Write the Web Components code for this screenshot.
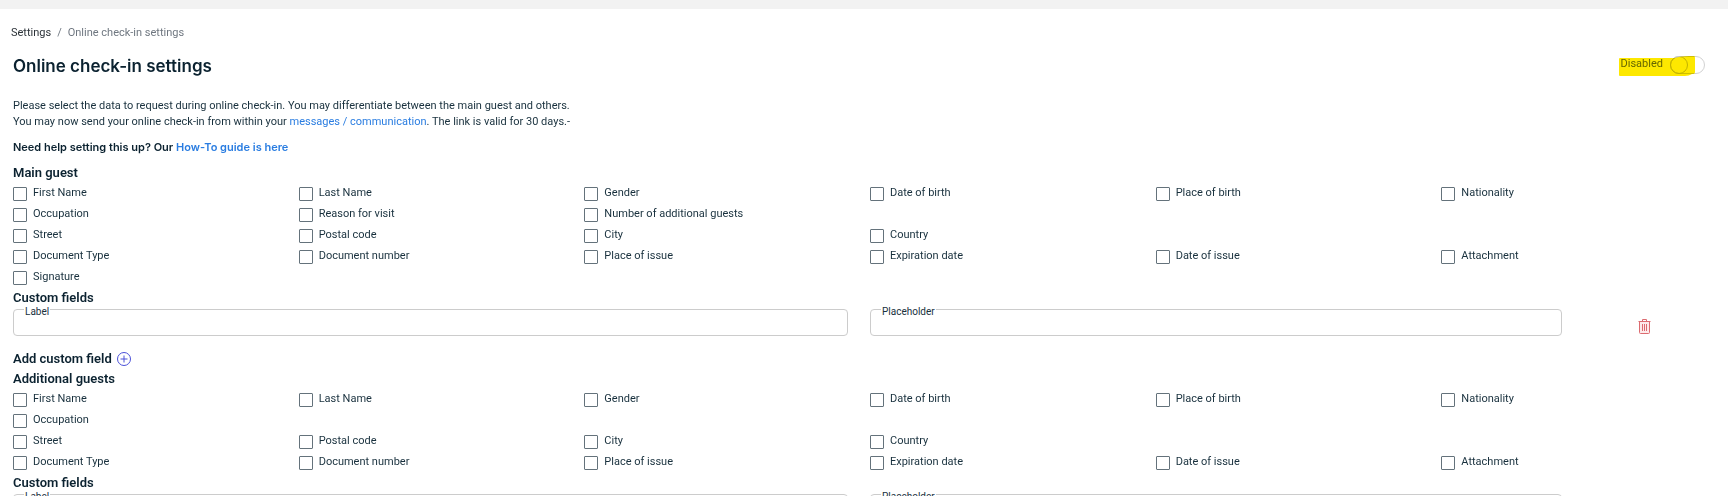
<!DOCTYPE html>
<html lang="en">
<head>
<meta charset="utf-8">
<title>Online check-in settings</title>
<style>
  body {
    margin: 0;
    background: #fff;
    color: #18303d;
    font: 11px/16px Roboto, "Liberation Sans", sans-serif;
  }
</style>
</head>
<body>
<settings-page>
  <bread-crumb slot="crumbs" parent="Settings" current="Online check-in settings"></bread-crumb>
  <toggle-switch slot="toggle">Disabled</toggle-switch>

  <guest-section heading="Main guest">
    <check-row items="First Name,Last Name,Gender,Date of birth,Place of birth,Nationality"></check-row>
    <check-row items="Occupation,Reason for visit,Number of additional guests"></check-row>
    <check-row items="Street,Postal code,City,Country"></check-row>
    <check-row items="Document Type,Document number,Place of issue,Expiration date,Date of issue,Attachment"></check-row>
    <check-row items="Signature"></check-row>
  </guest-section>
  <guest-section heading="Custom fields">
    <custom-field></custom-field>
  </guest-section>
  <add-field>Add custom field</add-field>

  <guest-section heading="Additional guests">
    <check-row items="First Name,Last Name,Gender,Date of birth,Place of birth,Nationality"></check-row>
    <check-row items="Occupation"></check-row>
    <check-row items="Street,Postal code,City,Country"></check-row>
    <check-row items="Document Type,Document number,Place of issue,Expiration date,Date of issue,Attachment"></check-row>
  </guest-section>
  <guest-section heading="Custom fields">
    <custom-field></custom-field>
  </guest-section>
</settings-page>

<script>
// page frame: grey strip, breadcrumb, title row, intro text and the sections
class SettingsPage extends HTMLElement {
  constructor() {
    super();
    const shadow = this.attachShadow({ mode: "open" });
    shadow.innerHTML = `
    <style>
      :host { display: block; border-top: 9px solid #f2f2f2; }
      main { padding: 13px 23px 0 13px; }
      header { display: flex; justify-content: space-between; align-items: flex-start; }
      h1 {
        margin: 0;
        color: #0b2230;
        font: 600 17px/24px Inter, Roboto, sans-serif;
      }
      .crumbs { padding: 16px 11px 0; }
      p { margin: 0; }
      .intro { margin-top: 20px; }
      .help {
        margin: 9px 0 8px;
        color: #0b2230;
        font-family: Inter, Roboto, sans-serif;
        font-weight: 600;
      }
      a { color: #2a7de1; text-decoration: none; }
    </style>
    <div class="crumbs"><slot name="crumbs"></slot></div>
    <main>
      <header>
        <h1>Online check-in settings</h1>
        <slot name="toggle"></slot>
      </header>
      <p class="intro">Please select the data to request during online check-in. You may differentiate between the main guest and others.<br>
      You may now send your online check-in from within your <a href="#messages">messages / communication</a>. The link is valid for 30 days.-</p>
      <p class="help">Need help setting this up? Our <a href="#guide">How-To guide is here</a></p>
      <slot></slot>
    </main>`;
  }
}

class BreadCrumb extends HTMLElement {
  connectedCallback() {
    const shadow = this.attachShadow({ mode: "open" });
    shadow.innerHTML = `
    <style>
      :host { display: block; }
      nav { display: flex; gap: 6px; color: #6f7780; }
      a { color: #2b3238; text-decoration: none; }
    </style>
    <nav aria-label="Breadcrumb">
      <a href="#settings">${this.getAttribute("parent")}</a>
      <span>/</span>
      <span>${this.getAttribute("current")}</span>
    </nav>`;
  }
}

class ToggleSwitch extends HTMLElement {
  constructor() {
    super();
    const shadow = this.attachShadow({ mode: "open" });
    shadow.innerHTML = `
    <style>
      :host { display: block; position: relative; padding-top: 2px; }
      label { display: flex; align-items: flex-start; gap: 7px; color: #66706c; }
      input {
        appearance: none;
        box-sizing: border-box;
        width: 35px;
        height: 18px;
        margin: 0;
        border: 1px solid #d2d2d2;
        border-radius: 9px;
        background: #fff;
      }
      input::before {
        content: "";
        display: block;
        box-sizing: border-box;
        width: 18px;
        height: 18px;
        margin: -1px;
        border: 1px solid #c4c4c4;
        border-radius: 50%;
      }
      /* marker stroke over the label and the knob */
      svg {
        position: absolute;
        left: -2px;
        top: 2px;
        mix-blend-mode: multiply;
        pointer-events: none;
      }
    </style>
    <label><slot></slot><input type="checkbox" role="switch"></label>
    <svg width="78" height="20" viewBox="0 0 78 20" aria-hidden="true">
      <path d="M0 3Q0 2 1 2H55Q62 0 70 0H75Q76 0 76 2V16Q76 18 73 18Q70 20 66 20H1Q0 20 0 19Z" fill="#fde800"/>
    </svg>`;
  }
}

// heading with whatever rows are put below it
class GuestSection extends HTMLElement {
  connectedCallback() {
    const shadow = this.attachShadow({ mode: "open" });
    shadow.innerHTML = `
    <style>
      :host { display: block; }
      h2 { margin: 0; color: #0b2230; font-size: 13px; line-height: 20px; font-weight: 600; }
    </style>
    <h2>${this.getAttribute("heading")}</h2>
    <slot></slot>`;
  }
}

// up to six checkboxes on one line
class CheckRow extends HTMLElement {
  connectedCallback() {
    const items = this.getAttribute("items").split(",");
    const shadow = this.attachShadow({ mode: "open" });
    shadow.innerHTML = `
    <style>
      :host { display: grid; grid-template-columns: repeat(6, 1fr); column-gap: 22px; height: 21px; }
      label { display: flex; align-items: flex-start; gap: 6px; padding-top: 2px; white-space: nowrap; }
      input {
        appearance: none;
        box-sizing: border-box;
        width: 14px;
        height: 14px;
        margin: 2px 0 0;
        border: 1px solid #64727b;
        border-radius: 1px;
        background: #fff;
      }
      input:checked { background: #2a7de1; }
    </style>
    ${items.map((item) => `<label><input type="checkbox">${item}</label>`).join("")}`;
  }
}

class CustomField extends HTMLElement {
  constructor() {
    super();
    const shadow = this.attachShadow({ mode: "open" });
    shadow.innerHTML = `
    <style>
      :host { display: grid; grid-template-columns: repeat(12, 1fr); column-gap: 22px; padding: 1px 0 13px; }
      div { position: relative; }
      .label { grid-column: span 6; }
      .placeholder { grid-column: span 5; }
      input {
        display: block;
        box-sizing: border-box;
        width: 100%;
        height: 27px;
        padding: 4px 11px;
        border: 1px solid #ccc;
        border-radius: 4px;
        font: inherit;
        color: inherit;
      }
      label {
        position: absolute;
        left: 11px;
        top: -4px;
        padding: 0 1px;
        background: #fff;
        font-size: 10px;
        line-height: 14px;
      }
      button {
        justify-self: center;
        align-self: end;
        padding: 0;
        border: 0;
        background: none;
        height: 19px;
      }
      svg { display: block; }
    </style>
    <div class="label"><input id="label" type="text"><label for="label">Label</label></div>
    <div class="placeholder"><input id="placeholder" type="text"><label for="placeholder">Placeholder</label></div>
    <button type="button" aria-label="Delete field">
      <svg width="13" height="15" viewBox="0 0 13 15" fill="none" stroke="#dc6b70">
        <path d="M1.5 2.5h10v11a1 1 0 0 1-1 1h-8a1 1 0 0 1-1-1z" fill="#fdeaea"/>
        <path d="M0.5 2.5h12M4.5 2V0.5h4V2"/>
        <path d="M4.5 5v7M6.5 5v7M8.5 5v7"/>
      </svg>
    </button>`;
  }
}

class AddField extends HTMLElement {
  constructor() {
    super();
    const shadow = this.attachShadow({ mode: "open" });
    shadow.innerHTML = `
    <style>
      :host { display: block; }
      button {
        display: flex;
        align-items: center;
        gap: 5px;
        height: 20px;
        padding: 0;
        border: 0;
        background: none;
        color: #0b2230;
        font: 600 13px/20px Roboto, "Liberation Sans", sans-serif;
      }
    </style>
    <button type="button"><slot></slot>
      <svg width="14" height="14" viewBox="0 0 14 14" fill="none" stroke="#4a50d8" aria-hidden="true">
        <circle cx="7" cy="7" r="6.5"/>
        <path d="M7 3.5v7M3.5 7h7"/>
      </svg>
    </button>`;
  }
}

customElements.define("settings-page", SettingsPage);
customElements.define("bread-crumb", BreadCrumb);
customElements.define("toggle-switch", ToggleSwitch);
customElements.define("guest-section", GuestSection);
customElements.define("check-row", CheckRow);
customElements.define("custom-field", CustomField);
customElements.define("add-field", AddField);
</script>
</body>
</html>
